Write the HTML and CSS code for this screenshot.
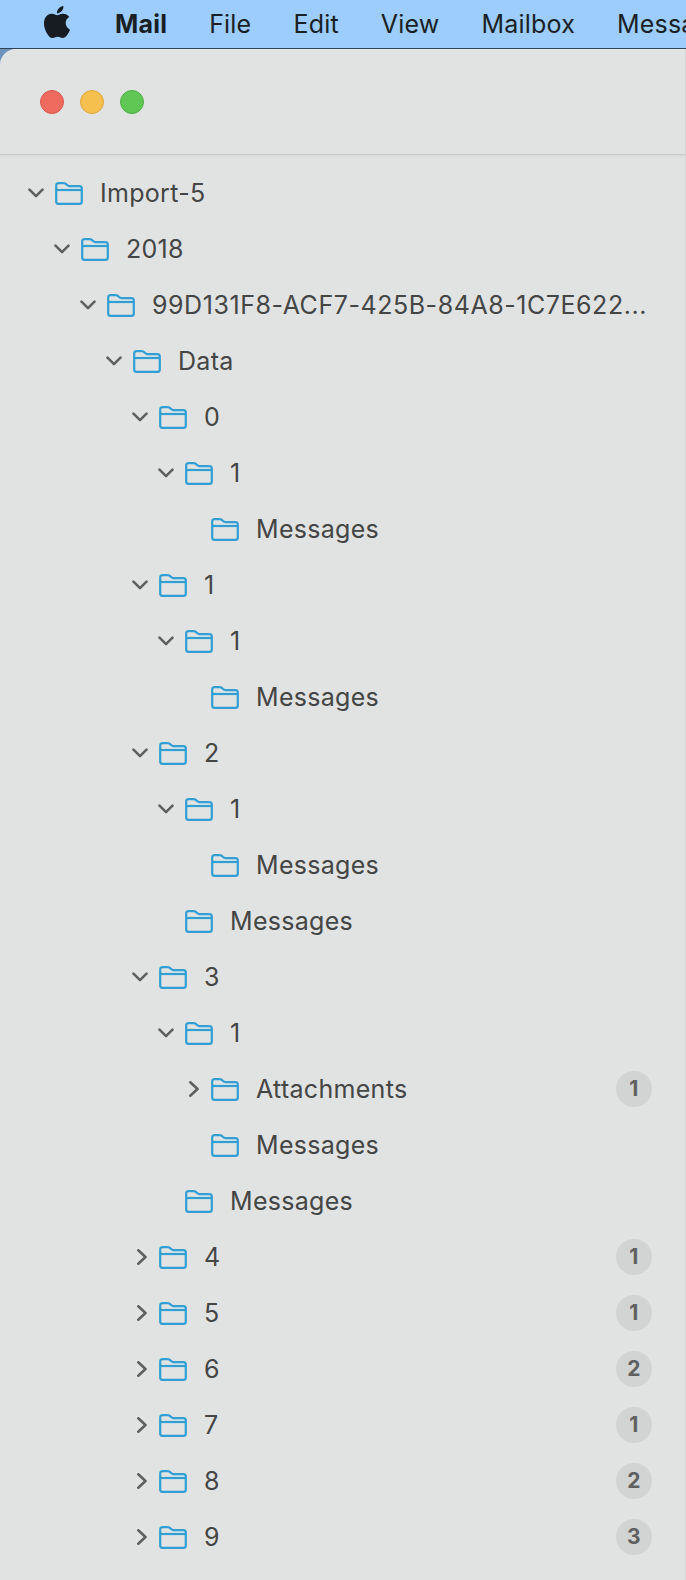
FILE: index.html
```html
<!DOCTYPE html>
<html lang="en">
  <head>
    <meta charset="UTF-8" />
    <title>Mail</title>
    <link rel="stylesheet" href="styles.css">
  </head>
  <body>
    <svg class="defs" width="0" height="0">
      <symbol id="folder" viewBox="0 0 28 23">
        <path d="M1.2 6V3.6C1.2 2.2 2.2 1.2 3.6 1.2H8.8C10 1.2 10.6 1.6 11.4 2.4L12.4 3.3C13 3.9 13.6 4.1 14.4 4.1H24.4C25.8 4.1 26.8 5.1 26.8 6.5V19.4C26.8 20.8 25.8 21.8 24.4 21.8H3.6C2.2 21.8 1.2 20.8 1.2 19.4V6Z" />
        <path d="M1.2 8H26.8" />
      </symbol>
      <symbol id="chev-down" viewBox="0 0 16 16">
        <path d="M1.5 4.7L8 11.2L14.5 4.7" />
      </symbol>
      <symbol id="chev-right" viewBox="0 0 16 16">
        <path d="M6.3 1.3L13.5 8L6.3 14.7" />
      </symbol>
    </svg>

    <div class="menubar">
      <svg class="apple" viewBox="0 0 24 24"><path d="M12.152 6.896c-.948 0-2.415-1.078-3.96-1.04-2.04.027-3.91 1.183-4.961 3.014-2.117 3.675-.546 9.103 1.519 12.09 1.013 1.454 2.208 3.09 3.792 3.039 1.52-.065 2.09-.987 3.935-.987 1.831 0 2.35.987 3.96.948 1.637-.026 2.676-1.48 3.676-2.948 1.156-1.688 1.636-3.325 1.662-3.415-.039-.013-3.182-1.221-3.22-4.857-.026-3.04 2.48-4.494 2.597-4.559-1.429-2.09-3.623-2.324-4.39-2.376-2-.156-3.675 1.09-4.61 1.09zM15.53 3.83c.843-1.012 1.4-2.427 1.245-3.83-1.207.052-2.662.805-3.532 1.818-.78.896-1.454 2.338-1.273 3.714 1.338.104 2.715-.688 3.559-1.701" /></svg>
      <span class="menu-item app-name">Mail</span>
      <span class="menu-item">File</span>
      <span class="menu-item">Edit</span>
      <span class="menu-item">View</span>
      <span class="menu-item">Mailbox</span>
      <span class="menu-item">Message</span>
    </div>

    <div class="window">
      <div class="toolbar">
        <span class="light red"></span>
        <span class="light yellow"></span>
        <span class="light green"></span>
      </div>

      <div class="sidebar">
        <div class="row level-0"><svg class="chev"><use href="#chev-down" /></svg><svg class="folder"><use href="#folder" /></svg><span class="name">Import-5</span></div>
        <div class="row level-1"><svg class="chev"><use href="#chev-down" /></svg><svg class="folder"><use href="#folder" /></svg><span class="name">2018</span></div>
        <div class="row level-2"><svg class="chev"><use href="#chev-down" /></svg><svg class="folder"><use href="#folder" /></svg><span class="name name-long">99D131F8-ACF7-425B-84A8-1C7E622...</span></div>
        <div class="row level-3"><svg class="chev"><use href="#chev-down" /></svg><svg class="folder"><use href="#folder" /></svg><span class="name">Data</span></div>
        <div class="row level-4"><svg class="chev"><use href="#chev-down" /></svg><svg class="folder"><use href="#folder" /></svg><span class="name">0</span></div>
        <div class="row level-5"><svg class="chev"><use href="#chev-down" /></svg><svg class="folder"><use href="#folder" /></svg><span class="name">1</span></div>
        <div class="row level-6"><span class="chev"></span><svg class="folder"><use href="#folder" /></svg><span class="name">Messages</span></div>
        <div class="row level-4"><svg class="chev"><use href="#chev-down" /></svg><svg class="folder"><use href="#folder" /></svg><span class="name">1</span></div>
        <div class="row level-5"><svg class="chev"><use href="#chev-down" /></svg><svg class="folder"><use href="#folder" /></svg><span class="name">1</span></div>
        <div class="row level-6"><span class="chev"></span><svg class="folder"><use href="#folder" /></svg><span class="name">Messages</span></div>
        <div class="row level-4"><svg class="chev"><use href="#chev-down" /></svg><svg class="folder"><use href="#folder" /></svg><span class="name">2</span></div>
        <div class="row level-5"><svg class="chev"><use href="#chev-down" /></svg><svg class="folder"><use href="#folder" /></svg><span class="name">1</span></div>
        <div class="row level-6"><span class="chev"></span><svg class="folder"><use href="#folder" /></svg><span class="name">Messages</span></div>
        <div class="row level-5"><span class="chev"></span><svg class="folder"><use href="#folder" /></svg><span class="name">Messages</span></div>
        <div class="row level-4"><svg class="chev"><use href="#chev-down" /></svg><svg class="folder"><use href="#folder" /></svg><span class="name">3</span></div>
        <div class="row level-5"><svg class="chev"><use href="#chev-down" /></svg><svg class="folder"><use href="#folder" /></svg><span class="name">1</span></div>
        <div class="row level-6"><svg class="chev"><use href="#chev-right" /></svg><svg class="folder"><use href="#folder" /></svg><span class="name">Attachments</span><span class="badge">1</span></div>
        <div class="row level-6"><span class="chev"></span><svg class="folder"><use href="#folder" /></svg><span class="name">Messages</span></div>
        <div class="row level-5"><span class="chev"></span><svg class="folder"><use href="#folder" /></svg><span class="name">Messages</span></div>
        <div class="row level-4"><svg class="chev"><use href="#chev-right" /></svg><svg class="folder"><use href="#folder" /></svg><span class="name">4</span><span class="badge">1</span></div>
        <div class="row level-4"><svg class="chev"><use href="#chev-right" /></svg><svg class="folder"><use href="#folder" /></svg><span class="name">5</span><span class="badge">1</span></div>
        <div class="row level-4"><svg class="chev"><use href="#chev-right" /></svg><svg class="folder"><use href="#folder" /></svg><span class="name">6</span><span class="badge">2</span></div>
        <div class="row level-4"><svg class="chev"><use href="#chev-right" /></svg><svg class="folder"><use href="#folder" /></svg><span class="name">7</span><span class="badge">1</span></div>
        <div class="row level-4"><svg class="chev"><use href="#chev-right" /></svg><svg class="folder"><use href="#folder" /></svg><span class="name">8</span><span class="badge">2</span></div>
        <div class="row level-4"><svg class="chev"><use href="#chev-right" /></svg><svg class="folder"><use href="#folder" /></svg><span class="name">9</span><span class="badge">3</span></div>
      </div>
    </div>
  </body>
</html>
```

FILE: styles.css
```css
html,
body {
  margin: 0;
  height: 1580px;
  overflow: hidden;
}
body {
  font-family: Inter, "Liberation Sans", sans-serif;
  background: #6d93bd;
}
.defs {
  position: absolute;
}
.menubar {
  display: flex;
  align-items: center;
  height: 48px;
  padding-left: 41px;
  background: #9ccdfc;
  border-bottom: 1px solid #2f4358;
  color: #1a1f24;
  font-size: 25px;
  letter-spacing: 0.2px;
  white-space: nowrap;
  overflow: hidden;
}
.apple {
  flex: none;
  width: 32px;
  height: 32px;
  margin-right: 42px;
  margin-top: -4px;
  fill: #161c22;
}
.menu-item {
  margin-right: 42px;
}
.app-name {
  font-weight: 700;
}
.window {
  height: 1531px;
  background: #e1e3e2;
  border-top-left-radius: 16px;
  border-top: 1px solid #eeeeee;
  border-right: 1px solid #d6d8d7;
  box-sizing: border-box;
}
.toolbar {
  display: flex;
  align-items: center;
  gap: 16px;
  height: 105px;
  padding: 0 0 1px 40px;
  box-sizing: border-box;
  border-bottom: 1px solid #c9cbca;
  box-shadow: 0 1px 2px rgba(0, 0, 0, 0.06);
}
.light {
  width: 24px;
  height: 24px;
  box-sizing: border-box;
  border-radius: 50%;
  border: 1px solid;
}
.red {
  background: #ef6a5f;
  border-color: #d9574e;
}
.yellow {
  background: #f6c04f;
  border-color: #dea53c;
}
.green {
  background: #60c654;
  border-color: #4fae45;
}
.sidebar {
  padding-top: 10px;
}
.row {
  display: flex;
  align-items: center;
  height: 56px;
  padding-right: 33px;
  color: #444545;
  font-size: 25px;
  letter-spacing: 0.3px;
}
.level-0 { padding-left: 28px; }
.level-1 { padding-left: 54px; }
.level-2 { padding-left: 80px; }
.level-3 { padding-left: 106px; }
.level-4 { padding-left: 132px; }
.level-5 { padding-left: 158px; }
.level-6 { padding-left: 184px; }
.chev {
  flex: none;
  width: 16px;
  height: 16px;
  margin-right: 11px;
  fill: none;
  stroke: #5f6060;
  stroke-width: 2.6;
  stroke-linecap: round;
  stroke-linejoin: round;
}
.folder {
  flex: none;
  width: 28px;
  height: 23px;
  margin-right: 17px;
  fill: none;
  stroke: #2f9fd6;
  stroke-width: 2.2;
  stroke-linejoin: round;
}
.name {
  flex: 1;
  white-space: nowrap;
}
.name-long {
  letter-spacing: 0.55px;
}
.badge {
  flex: none;
  width: 36px;
  height: 36px;
  border-radius: 50%;
  background: #d2d3d3;
  color: #606060;
  font-size: 21px;
  font-weight: 700;
  line-height: 36px;
  text-align: center;
}
```
